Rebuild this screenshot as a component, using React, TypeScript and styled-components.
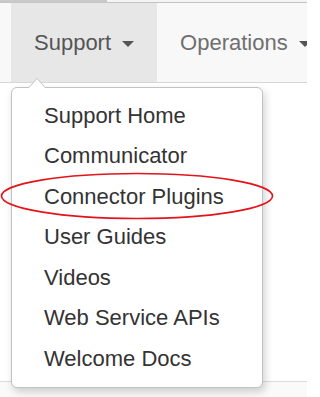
import styled, { createGlobalStyle } from "styled-components"

const GlobalStyle = createGlobalStyle`
  html, body {
    margin: 0;
    padding: 0;
    background: #ffffff;
  }
  body {
    font-family: "Liberation Sans", Arial, sans-serif;
  }
`

const menuItems = [
  "Support Home",
  "Communicator",
  "Connector Plugins",
  "User Guides",
  "Videos",
  "Web Service APIs",
  "Welcome Docs",
]

export default function App() {
  return (
    <>
      <GlobalStyle />
      <Page>
        <TopEdge>
          <TopEdgeDark />
        </TopEdge>
        <Navbar>
          <NavItem $active>
            <NavLink $active>
              Support <Caret />
            </NavLink>
            <Dropdown>
              {menuItems.map((item) => (
                <MenuItem key={item}>{item}</MenuItem>
              ))}
            </Dropdown>
          </NavItem>
          <NavItem>
            <NavLink>
              Operations <Caret />
            </NavLink>
          </NavItem>
        </Navbar>
        <Content />
        <Footer />
        <Highlight viewBox="0 0 274 48">
          <ellipse cx="137" cy="24" rx="135.5" ry="22.5" fill="none" stroke="#e3141b" strokeWidth="1.6" />
        </Highlight>
      </Page>
    </>
  )
}

const Page = styled.div`
  position: relative;
  width: 307px;
  height: 397px;
  overflow: hidden;
  display: flex;
  flex-direction: column;
  background: #ffffff;
`

const TopEdge = styled.div`
  height: 3px;
  background: #f4f4f4;
  border-bottom: 1px solid #c4c4c4;
  box-sizing: border-box;
  flex-shrink: 0;
`

const TopEdgeDark = styled.div`
  width: 107px;
  height: 2px;
  background: #c9c9c9;
`

const Navbar = styled.nav`
  display: flex;
  height: 80px;
  padding-left: 11px;
  background: #f8f8f8;
  border-bottom: 1px solid #d6d6d6;
  box-sizing: border-box;
  flex-shrink: 0;
  white-space: nowrap;
`

const NavItem = styled.div<{ $active?: boolean }>`
  position: relative;
  background: ${(p) => (p.$active ? "#e7e7e7" : "transparent")};
`

const NavLink = styled.a<{ $active?: boolean }>`
  display: flex;
  align-items: center;
  height: 79px;
  padding: 0 23px 0 23px;
  font-size: 22px;
  color: ${(p) => (p.$active ? "#555555" : "#6f6f6f")};
  cursor: pointer;
`

const Caret = styled.span`
  display: inline-block;
  width: 0;
  height: 0;
  margin-left: 11px;
  margin-top: 2px;
  border-top: 6px solid #555555;
  border-left: 6px solid transparent;
  border-right: 6px solid transparent;
`

const Dropdown = styled.div`
  position: absolute;
  top: 84px;
  left: 0;
  z-index: 2;
  width: 252px;
  padding: 7px 0 8px;
  background: #ffffff;
  border: 1px solid #c2c2c2;
  border-radius: 6px;
  box-shadow: 2px 4px 8px rgba(0, 0, 0, 0.18);
  box-sizing: border-box;

  &::before,
  &::after {
    content: "";
    position: absolute;
    left: 16px;
    border-left: 9px solid transparent;
    border-right: 9px solid transparent;
  }
  &::before {
    top: -10px;
    border-bottom: 10px solid #c2c2c2;
  }
  &::after {
    top: -9px;
    left: 17px;
    border-left-width: 8px;
    border-right-width: 8px;
    border-bottom: 9px solid #ffffff;
  }
`

const MenuItem = styled.a`
  display: block;
  padding: 4.5px 32px;
  line-height: 31.6px;
  font-size: 22px;
  color: #333333;
  cursor: pointer;
`

const Content = styled.div`
  flex: 0 0 298px;
  background: #ffffff;
`

const Footer = styled.div`
  flex: 1;
  background: #fafafa;
  border-top: 1px solid #dcdcdc;
`

const Highlight = styled.svg`
  position: absolute;
  left: 0;
  top: 172px;
  width: 274px;
  height: 48px;
  z-index: 3;
`
